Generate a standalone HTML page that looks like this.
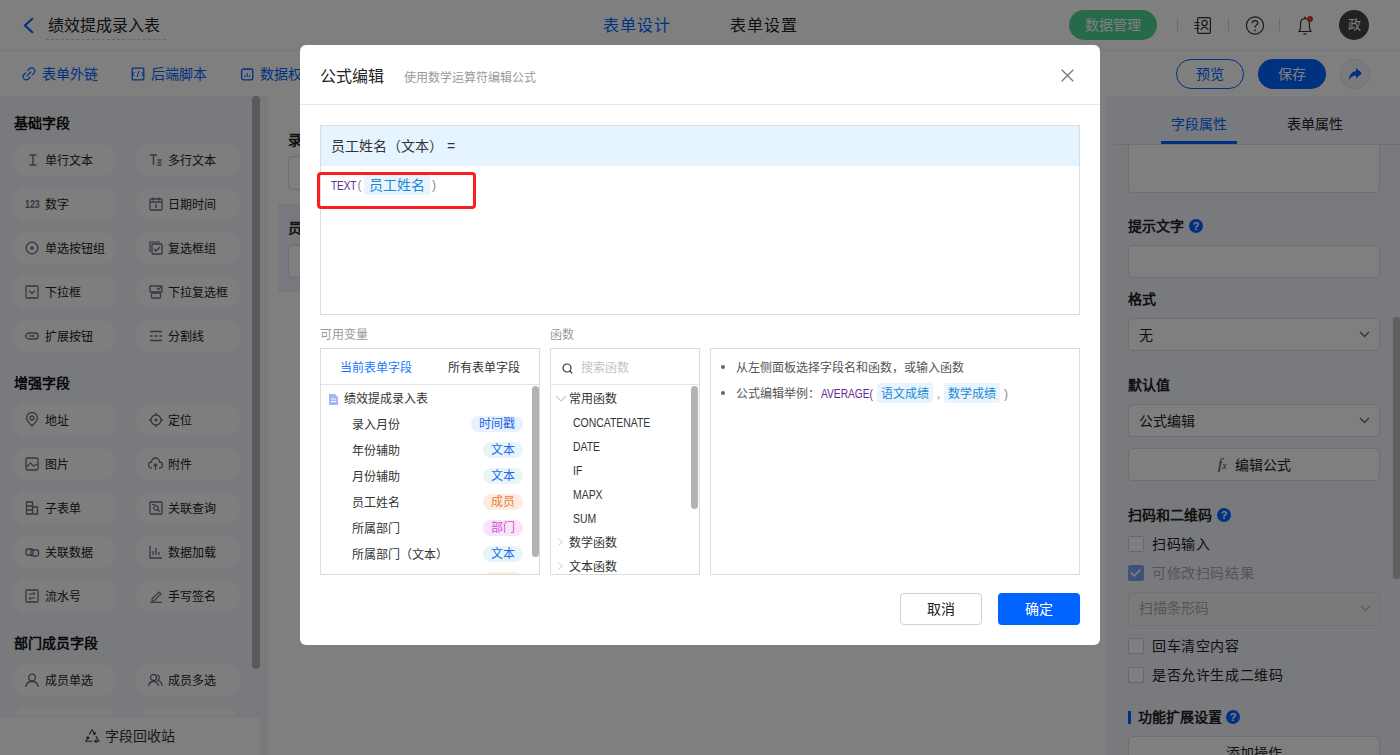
<!DOCTYPE html>
<html lang="zh-CN"><head><meta charset="utf-8">
<style>
*{box-sizing:border-box;margin:0;padding:0}
html,body{width:1400px;height:755px;overflow:hidden;background:#fff;font-family:"Liberation Sans",sans-serif;color:#222}
.a{position:absolute}
.t{position:absolute;white-space:nowrap}
#hdr{position:absolute;left:0;top:0;width:1400px;height:51px;background:#fff;border-bottom:1px solid #ececec}
#tb{position:absolute;left:0;top:51px;width:1400px;height:45px;background:#fff}
#side{position:absolute;left:0;top:96px;width:260px;height:659px;background:#f3f5fa}
#canvas{position:absolute;left:260px;top:96px;width:846px;height:659px;background:#f3f5fa}
#card{position:absolute;left:268px;top:96px;width:838px;height:659px;background:#fff}
#rp{position:absolute;left:1106px;top:96px;width:294px;height:659px;background:#f3f5fa}
.pill{position:absolute;width:105px;height:34px;border-radius:17px;background:#fdfdfd;font-size:12px;line-height:34px;color:#222}
.pill span{position:absolute;left:33px;top:1px}
.pill svg{position:absolute;left:13px;top:10px}
.sec{position:absolute;left:14px;font-size:14px;font-weight:bold;line-height:20px;color:#111;white-space:nowrap}
#ov{position:absolute;left:0;top:0;width:1400px;height:755px;background:rgba(0,0,0,.5)}
#modal{position:absolute;left:300px;top:45px;width:800px;height:600px;background:#fff;border-radius:6px;overflow:hidden}
.inp{position:absolute;left:1128px;width:252px;height:33px;background:#fff;border:1px solid #dcdcdc;border-radius:4px}
.lbl{position:absolute;left:1128px;font-size:14px;font-weight:bold;line-height:20px;color:#222;white-space:nowrap}
.q{position:absolute;width:14px;height:14px;border-radius:7px;background:#0064ff;color:#fff;font-size:11px;font-weight:bold;line-height:14px;text-align:center}
.cb{position:absolute;left:1128px;width:16px;height:16px;border:1px solid #cfcfcf;border-radius:2px;background:#fff}
.cbt{position:absolute;left:1152px;font-size:14px;line-height:20px;color:#222;white-space:nowrap;letter-spacing:0.6px}
.chev{position:absolute}
</style></head><body>
<div id="hdr">
  <svg class="a" style="left:21px;top:17px" width="14" height="17" viewBox="0 0 14 17"><path d="M11.3 1.8 L3.8 8.5 L11.3 15.2" fill="none" stroke="#0064ff" stroke-width="2.1" stroke-linecap="round" stroke-linejoin="round"/></svg>
  <div class="t" style="left:48px;top:15px;font-size:16px;line-height:22px;color:#222">绩效提成录入表</div>
  <div class="a" style="left:46px;top:39px;width:120px;height:0;border-top:1px dashed #cfcfcf"></div>
  <div class="t" style="left:603px;top:15px;font-size:16px;line-height:22px;color:#0064ff;letter-spacing:1px">表单设计</div>
  <div class="t" style="left:730px;top:15px;font-size:16px;line-height:22px;color:#222;letter-spacing:1px">表单设置</div>
  <div class="a" style="left:1069px;top:10px;width:88px;height:30px;border-radius:15px;background:#4fd494"></div>
  <div class="t" style="left:1085px;top:15px;font-size:14px;line-height:20px;color:#fff">数据管理</div>
  <div class="a" style="left:1177px;top:18px;width:1px;height:14px;background:#d8d8d8"></div>
  <div class="a" style="left:1228px;top:18px;width:1px;height:14px;background:#d8d8d8"></div>
  <div class="a" style="left:1279px;top:18px;width:1px;height:14px;background:#d8d8d8"></div>
  <svg class="a" style="left:1193px;top:16px" width="20" height="19" viewBox="0 0 20 19"><rect x="4.6" y="1.6" width="12.8" height="15.8" rx="1.2" fill="none" stroke="#333" stroke-width="1.2"/><path d="M1.5 6.5h5M1.5 9.5h5M1.5 12.5h5" stroke="#333" stroke-width="1.1"/><circle cx="11.5" cy="7" r="2.6" fill="none" stroke="#333" stroke-width="1.2"/><path d="M7.6 13.8 Q11.5 8.6 15.4 13.8" fill="none" stroke="#333" stroke-width="1.2"/></svg>
  <svg class="a" style="left:1245px;top:16px" width="20" height="20" viewBox="0 0 20 20"><circle cx="10" cy="9.5" r="8.6" fill="none" stroke="#333" stroke-width="1.2"/><path d="M7.3 7.3 Q7.3 4.6 10 4.6 Q12.7 4.6 12.7 7 Q12.7 8.6 10.9 9.5 Q10 10 10 11.8" fill="none" stroke="#333" stroke-width="1.2"/><circle cx="10" cy="14.3" r="0.9" fill="#333"/></svg>
  <svg class="a" style="left:1296px;top:15px" width="20" height="21" viewBox="0 0 20 21"><path d="M3 16.5 Q4.5 15 4.5 12 L4.5 9 Q4.5 4 9 3.4 Q13.5 4 13.5 9 L13.5 12 Q13.5 15 15 16.5 Z" fill="none" stroke="#333" stroke-width="1.2" stroke-linejoin="round"/><path d="M9 1.4v2" stroke="#333" stroke-width="1.2"/><path d="M7.4 19 h3.2" stroke="#333" stroke-width="1.2"/><circle cx="14" cy="4" r="3" fill="#e53935"/></svg>
  <div class="a" style="left:1339px;top:10px;width:30px;height:30px;border-radius:15px;background:#444"></div>
  <div class="t" style="left:1347.5px;top:16px;font-size:13px;line-height:18px;color:#fff">政</div>
</div>
<div id="tb">
  <svg class="a" style="left:22px;top:16px" width="14" height="14" viewBox="0 0 14 14"><path d="M5.6 3.6 L7.4 1.8 Q9.6 -0.2 11.8 1.9 Q13.8 4 11.8 6.3 L10.2 7.9" fill="none" stroke="#0064ff" stroke-width="1.2" stroke-linecap="round"/><path d="M8.2 10.2 L6.4 12 Q4.2 14 2 11.9 Q0 9.8 2 7.5 L3.6 5.9" fill="none" stroke="#0064ff" stroke-width="1.2" stroke-linecap="round"/><path d="M5 8.8 L8.8 5" stroke="#0064ff" stroke-width="1.2" stroke-linecap="round"/></svg>
  <div class="t" style="left:42px;top:13px;font-size:14px;line-height:20px;color:#0064ff">表单外链</div>
  <svg class="a" style="left:131px;top:16px" width="14" height="14" viewBox="0 0 14 14"><rect x="1.2" y="1.2" width="11.6" height="11.6" rx="1" fill="none" stroke="#0064ff" stroke-width="1.3"/><path d="M3.6 5 L1.6 7 L3.6 9 M10.4 5 L12.4 7 L10.4 9 M8 4 L6 10" fill="none" stroke="#0064ff" stroke-width="1"/></svg>
  <div class="t" style="left:151px;top:13px;font-size:14px;line-height:20px;color:#0064ff">后端脚本</div>
  <svg class="a" style="left:240px;top:16px" width="14" height="14" viewBox="0 0 14 14"><rect x="1.6" y="2" width="11.2" height="10.8" rx="2" fill="none" stroke="#0064ff" stroke-width="1.3"/><path d="M4.8 10V8 M7.2 10V6 M9.6 10V8" stroke="#0064ff" stroke-width="1"/></svg>
  <div class="t" style="left:260px;top:13px;font-size:14px;line-height:20px;color:#0064ff">数据权限</div>
  <div class="a" style="left:1176px;top:8px;width:68px;height:30px;border-radius:15px;border:1px solid #0064ff;background:#fff"></div>
  <div class="t" style="left:1196px;top:13px;font-size:14px;line-height:20px;color:#0064ff">预览</div>
  <div class="a" style="left:1258px;top:8px;width:68px;height:30px;border-radius:15px;background:#0064ff"></div>
  <div class="t" style="left:1278px;top:13px;font-size:14px;line-height:20px;color:#fff">保存</div>
  <div class="a" style="left:1340px;top:8px;width:30px;height:30px;border-radius:15px;border:1px solid #dfe6f5;background:#f3f6fd"></div>
  <svg class="a" style="left:1347px;top:15px" width="16" height="16" viewBox="0 0 16 16"><path d="M9 2 L15 7.2 L9 12.5 L9 9.6 Q4.5 9.6 1.8 14.2 Q2.2 6.2 9 5 Z" fill="#0064ff"/></svg>
</div>
<div id="side"></div>
<div class="sec" style="top:113px">基础字段</div>
<div class="pill" style="left:12px;top:143px"><svg width="14" height="14" viewBox="0 0 14 14" style="left:14px;top:10px"><path d="M3.5 2h7M3.5 12h7M7 2v10" stroke="#656f86" stroke-width="1.4" fill="none"/></svg><span>单行文本</span></div>
<div class="pill" style="left:135px;top:143px"><svg width="14" height="14" viewBox="0 0 14 14" style="left:14px;top:10px"><path d="M1 2h7M4.5 2v10M8.5 7h4M8.5 9.5h4M8.5 12h4" stroke="#656f86" stroke-width="1.4" fill="none"/></svg><span>多行文本</span></div>
<div class="pill" style="left:12px;top:187px"><span style="position:absolute;left:12.5px;top:0;font-size:11px;font-weight:bold;color:#667085;transform:scaleX(0.8);transform-origin:0 0">123</span><span>数字</span></div>
<div class="pill" style="left:135px;top:187px"><svg width="14" height="14" viewBox="0 0 14 14" style="left:14px;top:10px"><rect x="1" y="2" width="12" height="11" rx="1" stroke="#656f86" stroke-width="1.3" fill="none"/><path d="M1 5h12M4 0.5v3M10 0.5v3M7 7v4" stroke="#656f86" stroke-width="1.3" fill="none"/></svg><span>日期时间</span></div>
<div class="pill" style="left:12px;top:231px"><svg width="14" height="14" viewBox="0 0 14 14" style="left:13px;top:10px"><circle cx="7" cy="7" r="5.8" stroke="#656f86" stroke-width="1.3" fill="none"/><circle cx="7" cy="7" r="1.8" fill="#656f86"/></svg><span>单选按钮组</span></div>
<div class="pill" style="left:135px;top:231px"><svg width="14" height="14" viewBox="0 0 14 14" style="left:14px;top:10px"><path d="M1 11V1h10" stroke="#656f86" stroke-width="1.2" fill="none"/><rect x="3" y="3" width="10" height="10" rx="1" stroke="#656f86" stroke-width="1.3" fill="none"/><path d="M5 8l2 2 4-4" stroke="#656f86" stroke-width="1.3" fill="none"/></svg><span>复选框组</span></div>
<div class="pill" style="left:12px;top:275px"><svg width="14" height="14" viewBox="0 0 14 14" style="left:13px;top:10px"><rect x="1" y="1" width="12" height="12" rx="1" stroke="#656f86" stroke-width="1.3" fill="none"/><path d="M4 5.5l3 3 3-3" stroke="#656f86" stroke-width="1.3" fill="none"/></svg><span>下拉框</span></div>
<div class="pill" style="left:135px;top:275px"><svg width="14" height="14" viewBox="0 0 14 14" style="left:14px;top:10px"><rect x="1" y="1" width="12" height="6" rx="1" stroke="#656f86" stroke-width="1.3" fill="none"/><rect x="2.5" y="8" width="9" height="5" rx="1" stroke="#656f86" stroke-width="1.3" fill="none"/><path d="M8 3l1.5 1.5L12 2" stroke="#656f86" stroke-width="1.1" fill="none"/></svg><span>下拉复选框</span></div>
<div class="pill" style="left:12px;top:319px"><svg width="14" height="14" viewBox="0 0 14 14" style="left:13px;top:10px"><rect x="0.8" y="4" width="12.4" height="6" rx="3" stroke="#656f86" stroke-width="1.3" fill="none"/><path d="M4 7h6" stroke="#656f86" stroke-width="1.3"/></svg><span>扩展按钮</span></div>
<div class="pill" style="left:135px;top:319px"><svg width="14" height="14" viewBox="0 0 14 14" style="left:14px;top:10px"><path d="M1 2.5h12M1 11.5h12M1 7h2.5M5.5 7h3M10.5 7h2.5" stroke="#656f86" stroke-width="1.3" fill="none"/></svg><span>分割线</span></div>
<div class="sec" style="top:373px">增强字段</div>
<div class="pill" style="left:12px;top:403px"><svg width="14" height="15" viewBox="0 0 14 15" style="left:13px;top:9px"><path d="M7 14 Q1.5 8.5 1.5 6 A5.5 5.5 0 0 1 12.5 6 Q12.5 8.5 7 14Z" stroke="#656f86" stroke-width="1.3" fill="none"/><circle cx="7" cy="6" r="2" stroke="#656f86" stroke-width="1.3" fill="none"/></svg><span>地址</span></div>
<div class="pill" style="left:135px;top:403px"><svg width="14" height="14" viewBox="0 0 14 14" style="left:14px;top:10px"><circle cx="7" cy="7" r="5" stroke="#656f86" stroke-width="1.3" fill="none"/><circle cx="7" cy="7" r="1.5" fill="#656f86"/><path d="M7 0v2.5M7 11.5V14M0 7h2.5M11.5 7H14" stroke="#656f86" stroke-width="1.3"/></svg><span>定位</span></div>
<div class="pill" style="left:12px;top:447px"><svg width="14" height="14" viewBox="0 0 14 14" style="left:13px;top:10px"><rect x="1" y="1" width="12" height="12" rx="1.5" stroke="#656f86" stroke-width="1.3" fill="none"/><path d="M1.5 10l4-4 3 3 4-2" stroke="#656f86" stroke-width="1.2" fill="none"/></svg><span>图片</span></div>
<div class="pill" style="left:135px;top:447px"><svg width="15" height="14" viewBox="0 0 15 14" style="left:13px;top:10px"><path d="M4 11H3.5A3 3 0 0 1 3.5 5 A4 4 0 0 1 11.5 5 A3 3 0 0 1 11.5 11H11" stroke="#656f86" stroke-width="1.3" fill="none"/><path d="M7.5 13V7M5.5 9l2-2 2 2" stroke="#656f86" stroke-width="1.3" fill="none"/></svg><span>附件</span></div>
<div class="pill" style="left:12px;top:491px"><svg width="14" height="14" viewBox="0 0 14 14" style="left:13px;top:10px"><path d="M1.5 1h6v12h-6z M7.5 6h5v7h-5 M1.5 5h6M1.5 9h6" stroke="#656f86" stroke-width="1.3" fill="none"/></svg><span>子表单</span></div>
<div class="pill" style="left:135px;top:491px"><svg width="14" height="14" viewBox="0 0 14 14" style="left:14px;top:10px"><rect x="1" y="1" width="12" height="12" rx="1" stroke="#656f86" stroke-width="1.3" fill="none"/><circle cx="7" cy="7" r="2.3" stroke="#656f86" stroke-width="1.2" fill="none"/><path d="M8.7 8.7l2.5 2.5M3 3.5h3" stroke="#656f86" stroke-width="1.2"/></svg><span>关联查询</span></div>
<div class="pill" style="left:12px;top:535px"><svg width="15" height="14" viewBox="0 0 15 14" style="left:13px;top:10px"><rect x="1" y="4" width="7" height="6" rx="1.5" stroke="#656f86" stroke-width="1.3" fill="none"/><rect x="6" y="5" width="7.5" height="6" rx="1.5" stroke="#656f86" stroke-width="1.3" fill="none"/></svg><span>关联数据</span></div>
<div class="pill" style="left:135px;top:535px"><svg width="14" height="14" viewBox="0 0 14 14" style="left:14px;top:10px"><path d="M1 1v12h12M4 10V6M7 10V3M10 10V7" stroke="#656f86" stroke-width="1.3" fill="none"/></svg><span>数据加载</span></div>
<div class="pill" style="left:12px;top:579px"><svg width="14" height="14" viewBox="0 0 14 14" style="left:13px;top:10px"><rect x="1" y="1" width="12" height="12" rx="1" stroke="#656f86" stroke-width="1.3" fill="none"/><path d="M4 5h6M4 9h6M8 3.5l2 1.5M6 10.5L4 9" stroke="#656f86" stroke-width="1.2" fill="none"/></svg><span>流水号</span></div>
<div class="pill" style="left:135px;top:579px"><svg width="14" height="14" viewBox="0 0 14 14" style="left:14px;top:10px"><path d="M3 10 L10 3 L12 5 L5 12 L3 12 Z" stroke="#656f86" stroke-width="1.2" fill="none"/><path d="M1 13.3h12" stroke="#656f86" stroke-width="1.2"/></svg><span>手写签名</span></div>
<div class="sec" style="top:633px">部门成员字段</div>
<div class="pill" style="left:12px;top:663px"><svg width="14" height="14" viewBox="0 0 14 14" style="left:13px;top:10px"><circle cx="7" cy="4.5" r="3.3" stroke="#656f86" stroke-width="1.3" fill="none"/><path d="M1 14 Q1 8.5 7 8.5 Q13 8.5 13 14" stroke="#656f86" stroke-width="1.3" fill="none"/></svg><span>成员单选</span></div>
<div class="pill" style="left:135px;top:663px"><svg width="15" height="14" viewBox="0 0 15 14" style="left:13px;top:10px"><circle cx="5.5" cy="4.5" r="3" stroke="#656f86" stroke-width="1.3" fill="none"/><path d="M0.8 13 Q0.8 8.5 5.5 8.5 Q10.2 8.5 10.2 13" stroke="#656f86" stroke-width="1.3" fill="none"/><path d="M9 1.8 A3 3 0 0 1 10 7.3 Q14 8.5 14 13" stroke="#656f86" stroke-width="1.3" fill="none"/></svg><span>成员多选</span></div>
<div class="pill" style="left:12px;top:707px"><span></span></div>
<div class="pill" style="left:135px;top:707px"><span></span></div>
<div class="a" style="left:252px;top:96px;width:8px;height:573px;border-radius:4px;background:#b4b4b4"></div>
<div class="a" style="left:0;top:716px;width:260px;height:39px;background:#fff;border-top:1px solid #ececec"></div>
<svg class="a" style="left:84.5px;top:728.5px" width="15" height="14" viewBox="0 0 15 14"><path d="M4.4 5 L7.2 0.9 L10 5.3 M8.3 4.9 L10 5.3 L10.4 3.5 M11.2 7.4 L13.9 12.2 L9.8 12.2 M11.2 10.8 L9.8 12.2 L11.2 13.4 M7 12.2 L0.8 12.2 L3.3 8 M1.7 8.4 L3.3 8 L3.8 9.7" stroke="#333" stroke-width="1.1" fill="none" stroke-linejoin="round" stroke-linecap="round"/></svg>
<div class="t" style="left:105px;top:726px;font-size:14px;line-height:20px;color:#333">字段回收站</div>
<div id="canvas"></div><div id="card"></div>
<div class="t" style="left:288px;top:130px;font-size:14px;font-weight:bold;line-height:20px;color:#222">录入月份</div>
<div class="a" style="left:288px;top:156px;width:400px;height:34px;border:1px solid #dcdcdc;border-radius:4px;background:#fff"></div>
<div class="a" style="left:278px;top:204px;width:820px;height:88px;background:#eef2fc"></div>
<div class="t" style="left:288px;top:218px;font-size:14px;font-weight:bold;line-height:20px;color:#222">员工姓名</div>
<div class="a" style="left:288px;top:245px;width:400px;height:33px;border:1px solid #dcdcdc;border-radius:4px;background:#fff"></div>
<div id="rp"></div>
<div class="t" style="left:1171px;top:114px;font-size:14px;line-height:20px;color:#0064ff">字段属性</div>
<div class="t" style="left:1287px;top:114px;font-size:14px;line-height:20px;color:#222">表单属性</div>
<div class="a" style="left:1114px;top:144px;width:286px;height:1px;background:#dcdcdc"></div>
<div class="a" style="left:1161px;top:141px;width:76px;height:3px;background:#0064ff"></div>
<div class="a" style="left:1128px;top:145px;width:252px;height:48px;border:1px solid #dcdcdc;border-top:none;border-radius:0 0 4px 4px;background:#fff"></div>
<div class="lbl" style="top:216px">提示文字</div><div class="q" style="left:1189px;top:219px">?</div>
<div class="inp" style="top:245px"></div>
<div class="lbl" style="top:289px">格式</div>
<div class="inp" style="top:318px"></div>
<div class="t" style="left:1139px;top:325px;font-size:14px;line-height:20px;color:#222">无</div>
<svg class="chev" style="left:1359px;top:331px" width="11" height="7" viewBox="0 0 11 7"><path d="M1 1l4.5 4.5L10 1" stroke="#666" stroke-width="1.3" fill="none"/></svg>
<div class="lbl" style="top:375px">默认值</div>
<div class="inp" style="top:404px"></div>
<div class="t" style="left:1139px;top:411px;font-size:14px;line-height:20px;color:#222">公式编辑</div>
<svg class="chev" style="left:1359px;top:417px" width="11" height="7" viewBox="0 0 11 7"><path d="M1 1l4.5 4.5L10 1" stroke="#666" stroke-width="1.3" fill="none"/></svg>
<div class="inp" style="top:448px"></div>
<div class="t" style="left:1218px;top:454px;font-size:15px;line-height:20px;color:#444;font-family:'Liberation Serif',serif;font-style:italic">f<span style="font-size:10px">x</span></div>
<div class="t" style="left:1235px;top:455px;font-size:14px;line-height:20px;color:#222">编辑公式</div>
<div class="lbl" style="top:505px">扫码和二维码</div><div class="q" style="left:1217px;top:508px">?</div>
<div class="cb" style="top:536px"></div><div class="cbt" style="top:534px">扫码输入</div>
<div class="cb" style="top:565px;background:#7aa6f5;border-color:#7aa6f5"></div>
<svg class="a" style="left:1128px;top:565px" width="16" height="16" viewBox="0 0 16 16"><path d="M3 7.6 L6.3 10.8 L12.6 4.5" stroke="#fff" stroke-width="1.7" fill="none"/></svg>
<div class="cbt" style="top:563px;color:#aaa">可修改扫码结果</div>
<div class="a" style="left:1128px;top:592px;width:252px;height:34px;border:1px solid #e3e3e3;border-radius:4px;background:#f5f5f5"></div>
<div class="t" style="left:1139px;top:598px;font-size:14px;line-height:20px;color:#aaa">扫描条形码</div>
<svg class="chev" style="left:1360px;top:605px" width="11" height="7" viewBox="0 0 11 7"><path d="M1 1l4.5 4.5L10 1" stroke="#bbb" stroke-width="1.3" fill="none"/></svg>
<div class="cb" style="top:638px"></div><div class="cbt" style="top:636px">回车清空内容</div>
<div class="cb" style="top:667px"></div><div class="cbt" style="top:665px">是否允许生成二维码</div>
<div class="a" style="left:1128px;top:711px;width:3px;height:13px;background:#0064ff"></div>
<div class="lbl" style="left:1138px;top:707px">功能扩展设置</div><div class="q" style="left:1226px;top:710px">?</div>
<div class="a" style="left:1128px;top:736px;width:252px;height:34px;border:1px solid #dcdcdc;border-radius:4px;background:#fff"></div>
<div class="t" style="left:1226px;top:743px;font-size:14px;line-height:20px;color:#222">添加操作</div>
<div class="a" style="left:1393px;top:317px;width:7px;height:262px;border-radius:3px;background:#c1c1c1"></div>
<div id="ov"></div>
<div id="modal"><div class="t" style="left:20px;top:21px;font-size:16px;line-height:22px;color:#222">公式编辑</div>
<div class="t" style="left:104px;top:25px;font-size:12px;line-height:17px;color:#999">使用数学运算符编辑公式</div>
<svg class="a" style="left:761px;top:24px" width="13" height="13" viewBox="0 0 13 13"><path d="M0.7 0.7L12.3 12.3M12.3 0.7L0.7 12.3" stroke="#777" stroke-width="1.3"/></svg>
<div class="a" style="left:0;top:59px;width:800px;height:1px;background:#e8e8e8"></div>
<div class="a" style="left:20px;top:80px;width:760px;height:190px;border:1px solid #dcdcdc;background:#fff"></div>
<div class="a" style="left:21px;top:81px;width:758px;height:40px;background:#e6f4ff"></div>
<div class="t" style="left:31px;top:91px;font-size:14px;line-height:20px;color:#333">员工姓名（文本） =</div>
<div class="t" style="left:30.5px;top:133px;font-size:12px;line-height:17px;color:#62259a;transform:scaleX(0.83);transform-origin:0 0">TEXT</div>
<div class="t" style="left:57.5px;top:132px;font-size:12px;line-height:17px;color:#888">(</div>
<div class="a" style="left:64px;top:130px;width:66px;height:20px;border-radius:3px;background:#eaf4fe"></div>
<div class="t" style="left:69px;top:130px;font-size:14px;line-height:20px;color:#1a8ad4">员工姓名</div>
<div class="t" style="left:132px;top:132px;font-size:12px;line-height:17px;color:#888">)</div>
<div class="a" style="left:17px;top:127px;width:159px;height:37px;border:3px solid #fa1e1e;border-radius:4px"></div>
<div class="t" style="left:20px;top:282px;font-size:12px;line-height:17px;color:#999">可用变量</div>
<div class="t" style="left:250px;top:282px;font-size:12px;line-height:17px;color:#999">函数</div>
<div class="a" style="left:20px;top:303px;width:220px;height:227px;border:1px solid #dcdcdc;background:#fff;overflow:hidden">
<div class="t" style="left:19px;top:11px;font-size:12px;line-height:17px;color:#1677ff">当前表单字段</div>
<div class="t" style="left:127px;top:11px;font-size:12px;line-height:17px;color:#333">所有表单字段</div>
<div class="a" style="left:0;top:35px;width:220px;height:1px;background:#e3e3e3"></div>
<svg class="a" style="left:7px;top:45px" width="11" height="11" viewBox="0 0 11 11"><path d="M1 0h6l3 3v8H1z" fill="#a3b5f7"/><path d="M3 5h5M3 7.5h5" stroke="#fff" stroke-width="1"/></svg>
<div class="t" style="left:23px;top:42px;font-size:12px;line-height:17px;color:#333">绩效提成录入表</div>
<div class="t" style="left:31px;top:68.0px;font-size:12px;line-height:17px;color:#333">录入月份</div>
<div class="t" style="left:150px;top:67.0px;width:52px;height:16px;border-radius:8px;background:#e8f1fd;font-size:12px;line-height:16px;color:#1f63e8;text-align:center">时间戳</div>
<div class="t" style="left:31px;top:94.0px;font-size:12px;line-height:17px;color:#333">年份辅助</div>
<div class="t" style="left:162px;top:93.0px;width:40px;height:16px;border-radius:8px;background:#e6f6f6;font-size:12px;line-height:16px;color:#2468f2;text-align:center">文本</div>
<div class="t" style="left:31px;top:120.0px;font-size:12px;line-height:17px;color:#333">月份辅助</div>
<div class="t" style="left:162px;top:119.0px;width:40px;height:16px;border-radius:8px;background:#e6f6f6;font-size:12px;line-height:16px;color:#2468f2;text-align:center">文本</div>
<div class="t" style="left:31px;top:146.0px;font-size:12px;line-height:17px;color:#333">员工姓名</div>
<div class="t" style="left:162px;top:145.0px;width:40px;height:16px;border-radius:8px;background:#fdebe1;font-size:12px;line-height:16px;color:#ec7a3c;text-align:center">成员</div>
<div class="t" style="left:31px;top:172.0px;font-size:12px;line-height:17px;color:#333">所属部门</div>
<div class="t" style="left:162px;top:171.0px;width:40px;height:16px;border-radius:8px;background:#f9e3f9;font-size:12px;line-height:16px;color:#d24fd2;text-align:center">部门</div>
<div class="t" style="left:31px;top:198.0px;font-size:12px;line-height:17px;color:#333">所属部门（文本）</div>
<div class="t" style="left:162px;top:197.0px;width:40px;height:16px;border-radius:8px;background:#e6f6f6;font-size:12px;line-height:16px;color:#2468f2;text-align:center">文本</div>
<div class="t" style="left:31px;top:224.0px;font-size:12px;line-height:17px;color:#333"></div>
<div class="t" style="left:162px;top:223.0px;width:40px;height:16px;border-radius:8px;background:#fdf0d8;font-size:12px;line-height:16px;color:#e0a030;text-align:center"></div>
<div class="a" style="left:211px;top:37px;width:7px;height:171px;border-radius:3.5px;background:#b3b3b3"></div>
</div>
<div class="a" style="left:250px;top:303px;width:150px;height:227px;border:1px solid #dcdcdc;background:#fff;overflow:hidden">
<svg class="a" style="left:11px;top:14px" width="11" height="11" viewBox="0 0 11 11"><circle cx="5" cy="5" r="4" stroke="#333" stroke-width="1.2" fill="none"/><path d="M8 8l2.3 2.3" stroke="#333" stroke-width="1.2"/></svg>
<div class="t" style="left:30px;top:11px;font-size:12px;line-height:17px;color:#c0c4cc">搜索函数</div>
<div class="a" style="left:0;top:35px;width:150px;height:1px;background:#e3e3e3"></div>
<svg class="a" style="left:4px;top:46px" width="12" height="7" viewBox="0 0 12 7"><path d="M1 1l5 5 5-5" stroke="#c8c8c8" stroke-width="1.1" fill="none"/></svg>
<div class="t" style="left:18px;top:42px;font-size:12px;line-height:17px;color:#333">常用函数</div>
<div class="t" style="left:22px;top:66.0px;font-size:12px;line-height:17px;color:#333;transform:scaleX(0.87);transform-origin:0 0">CONCATENATE</div>
<div class="t" style="left:22px;top:90.0px;font-size:12px;line-height:17px;color:#333;transform:scaleX(0.87);transform-origin:0 0">DATE</div>
<div class="t" style="left:22px;top:114.0px;font-size:12px;line-height:17px;color:#333;transform:scaleX(0.87);transform-origin:0 0">IF</div>
<div class="t" style="left:22px;top:138.0px;font-size:12px;line-height:17px;color:#333;transform:scaleX(0.87);transform-origin:0 0">MAPX</div>
<div class="t" style="left:22px;top:162.0px;font-size:12px;line-height:17px;color:#333;transform:scaleX(0.87);transform-origin:0 0">SUM</div>
<svg class="a" style="left:6.5px;top:189.0px" width="5" height="8" viewBox="0 0 5 8"><path d="M0.6 0.6L4.2 4L0.6 7.4" stroke="#c3cad8" stroke-width="1" fill="none"/></svg>
<div class="t" style="left:18px;top:186.0px;font-size:12px;line-height:17px;color:#333">数学函数</div>
<svg class="a" style="left:6.5px;top:213.0px" width="5" height="8" viewBox="0 0 5 8"><path d="M0.6 0.6L4.2 4L0.6 7.4" stroke="#c3cad8" stroke-width="1" fill="none"/></svg>
<div class="t" style="left:18px;top:210.0px;font-size:12px;line-height:17px;color:#333">文本函数</div>
<div class="a" style="left:140px;top:37px;width:7px;height:123px;border-radius:3.5px;background:#b3b3b3"></div>
</div>
<div class="a" style="left:410px;top:303px;width:370px;height:227px;border:1px solid #dcdcdc;background:#fff"></div>
<div class="a" style="left:421px;top:320px;width:4px;height:4px;border-radius:2px;background:#5a6478"></div>
<div class="t" style="left:436px;top:315px;font-size:12px;line-height:17px;color:#555">从左侧面板选择字段名和函数，或输入函数</div>
<div class="a" style="left:421px;top:346px;width:4px;height:4px;border-radius:2px;background:#5a6478"></div>
<div class="t" style="left:436px;top:341px;font-size:12px;line-height:17px;color:#555">公式编辑举例：</div>
<div class="t" style="left:520.5px;top:341px;font-size:12px;line-height:17px;color:#62259a;transform:scaleX(0.85);transform-origin:0 0">AVERAGE(</div>
<div class="a" style="left:577px;top:338px;width:56px;height:20px;border-radius:3px;background:#eaf4fe"></div>
<div class="t" style="left:581px;top:341px;font-size:12px;line-height:17px;color:#1a8ad4">语文成绩</div>
<div class="t" style="left:637px;top:341px;font-size:12px;line-height:17px;color:#888">,</div>
<div class="a" style="left:644px;top:338px;width:56px;height:20px;border-radius:3px;background:#eaf4fe"></div>
<div class="t" style="left:648px;top:341px;font-size:12px;line-height:17px;color:#1a8ad4">数学成绩</div>
<div class="t" style="left:704px;top:341px;font-size:12px;line-height:17px;color:#888">)</div>
<div class="a" style="left:600px;top:548px;width:82px;height:32px;border:1px solid #d0d0d0;border-radius:4px;background:#fff"></div>
<div class="t" style="left:627px;top:554px;font-size:14px;line-height:20px;color:#222">取消</div>
<div class="a" style="left:698px;top:548px;width:82px;height:32px;border-radius:4px;background:#0062ff"></div>
<div class="t" style="left:725px;top:554px;font-size:14px;line-height:20px;color:#fff;font-weight:500">确定</div></div>
</body></html>
